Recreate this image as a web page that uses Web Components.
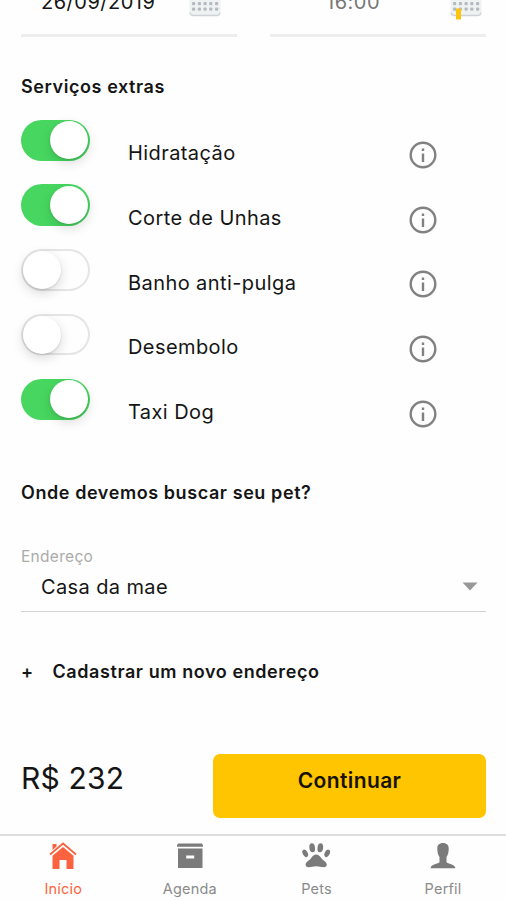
<!DOCTYPE html>
<html lang="pt-BR">
<head>
<meta charset="utf-8">
<title>Serviços extras</title>
<style>
  body {
    margin: 0;
    height: 900px;
    overflow: hidden;
    background: #fefefe;
    color: #151515;
    font-family: Inter, "Liberation Sans", sans-serif;
  }
</style>
</head>
<body>
<pet-booking></pet-booking>

<script>
"use strict";

(function () {
  const ICONS = {
    home: `<path d="M2 13.500 15 2.500 28 13.500" fill="none" stroke="currentColor" stroke-width="1.800"/><path d="M4.500 9V3h4v2.600zM15 6 25.500 14.800V28H18.500v-9h-7v9H4.500V14.800z"/>`,
    agenda: `<path d="M3 2.500h24q1.200 1.500 1 3.300H2q-.2-1.800 1-3.300zM3 7.500h24.500V27H3z"/><path d="M11.200 14.500h8v3h-8z" fill="#fefefe"/>`,
    pets: `<ellipse cx="11.200" cy="6.800" rx="2.800" ry="4.500" transform="rotate(-8 11.200 6.800)"/><ellipse cx="19.300" cy="6.800" rx="2.800" ry="4.500" transform="rotate(8 19.300 6.800)"/><ellipse cx="4.200" cy="12.300" rx="2.500" ry="4" transform="rotate(-25 4.200 12.300)"/><ellipse cx="26.200" cy="12.300" rx="2.500" ry="4" transform="rotate(25 26.200 12.300)"/><path d="M15.200 13.500c2 0 3.500 1.400 5 3.600 1.800 2.600 5.600 3.900 5.600 6.700 0 1.500-1.200 2.500-3 2.500-3 0-4.500-1-7.600-1s-4.600 1-7.600 1c-1.800 0-3-1-3-2.500 0-2.800 3.800-4.100 5.600-6.700 1.500-2.200 3-3.600 5-3.600z"/>`,
    perfil: `<path d="M15 2c3.800 0 5.800 2.300 5.700 5.500 0 3.500-.6 6.500-2.200 8.500v5.200c1 1.900 8.700 1.600 8.900 6.100H2.600c.2-4.500 7.900-4.200 8.900-6.100V16c-1.600-2-2.200-5-2.200-8.500C9.200 4.300 11.200 2 15 2z"/>`
  };

  function shadow(host, html) {
    host.attachShadow({ mode: "open" }).innerHTML = html;
  }

  class DateField extends HTMLElement {
    connectedCallback() {
      const dots = [3.5, 9].map((y) =>
        [4.5, 10.3, 16, 21.700, 27.500].map((x) => `<rect x="${x - 1.500}" y="${y + 18.500}" width="3.200" height="3.200" rx="1"/>`).join("")
      ).join("");
      const marker = this.hasAttribute("marked")
        ? `<path d="M6 28.500h5v11H6z" fill="#fdc40d"/>` : "";
      shadow(this, `
        <style>
          :host {
            display: flex;
            justify-content: space-between;
            box-sizing: border-box;
            width: 216px;
            height: 57px;
            border-bottom: 3px solid #ededed;
            padding: 0 16px 0 20px;
            font-size: 20px;
          }
          span { line-height: 24px; padding-top: 10px; letter-spacing: .5px; }
          :host([marked]) { color: #777; padding: 0 4px 0 56px; }
          svg { width: 32px; height: 40px; }
        </style>
        <span><slot></slot></span>
        <svg viewBox="0 0 32 40">
          <rect x=".5" y="4" width="31" height="31.500" rx="3" fill="#eff2f3"/>
          <path d="M1 32.500q.5 3 3 3h24q2.500 0 3-3" fill="none" stroke="#ccd2d5" stroke-width="1.300"/>
          <g fill="#b4bbc0">${dots}</g>${marker}
        </svg>`);
    }
  }

  class ToggleSwitch extends HTMLElement {
    connectedCallback() {
      shadow(this, `
        <style>
          :host {
            display: flex;
            align-items: center;
            box-sizing: border-box;
            width: 68.5px;
            height: 41.5px;
            padding: 0 1.5px;
            border-radius: 21px;
            box-shadow: inset 0 0 0 2px #e5e5e6;
          }
          i {
            width: 38px;
            height: 38px;
            border-radius: 50%;
            background: #fff;
            box-shadow: 0 4px 12px rgba(0, 0, 0, .15), 0 1px 2px rgba(0, 0, 0, .12);
          }
          :host([on]) { background: #47d760; justify-content: flex-end; box-shadow: none; }
        </style>
        <i></i>`);
    }
  }

  class ServiceRow extends HTMLElement {
    connectedCallback() {
      shadow(this, `
        <style>
          :host {
            display: grid;
            grid-template-columns: 107px 281px 28px;
            height: 64.8px;
            font-size: 20px;
          }
          span { line-height: 24px; padding-top: 21.5px; letter-spacing: .42px; white-space: nowrap; }
          svg { width: 28px; height: 28px; margin-top: 21.3px; }
        </style>
        <toggle-switch ${this.hasAttribute("on") ? "on" : ""}></toggle-switch>
        <span><slot></slot></span>
        <svg viewBox="0 0 28 28">
          <circle cx="14" cy="14" r="12.300" fill="none" stroke="#818181" stroke-width="2.400"/>
          <path d="M12.800 7.500h2.400v2.600h-2.400zM12.800 12.500h2.400v8.500h-2.400z" fill="#818181"/>
        </svg>`);
    }
  }

  class AddressSelect extends HTMLElement {
    connectedCallback() {
      shadow(this, `
        <style>
          :host { display: block; box-sizing: border-box; height: 65px; border-bottom: 1.500px solid #d2d2d2; }
          label { display: block; font-size: 15.500px; line-height: 20px; color: #ababab; letter-spacing: .3px; }
          div {
            display: flex;
            align-items: center;
            justify-content: space-between;
            height: 40px;
            padding: 0 8px 0 20px;
            font-size: 20px;
            letter-spacing: .38px;
          }
          svg { width: 16px; height: 9px; }
        </style>
        <label>${this.getAttribute("label")}</label>
        <div><slot></slot><svg viewBox="0 0 16 9"><path d="M.5.500h15L8 8.500z" fill="#999"/></svg></div>`);
    }
  }

  class TabItem extends HTMLElement {
    connectedCallback() {
      shadow(this, `
        <style>
          :host {
            display: flex;
            flex-direction: column;
            align-items: center;
            padding-top: 5px;
            color: #7b7b7b;
            font-size: 14.500px;
            line-height: 18px;
          }
          :host([active]) { color: #fb6340; }
          svg { width: 30px; height: 30px; fill: currentColor; }
          span { margin-top: 9px; letter-spacing: .2px; color: #8b8b8b; }
          :host([active]) span { color: inherit; }
        </style>
        <svg viewBox="0 0 30 30">${ICONS[this.getAttribute("icon")]}</svg>
        <span><slot></slot></span>`);
    }
  }

  class PetBooking extends HTMLElement {
    connectedCallback() {
      shadow(this, `
        <style>
          :host { display: flex; flex-direction: column; height: 900px; }
          main { height: 854px; margin-top: -20px; padding: 0 20px 0 21px; box-sizing: border-box; }
          .when { display: flex; justify-content: space-between; }
          h2 { margin: 0; font-size: 18px; line-height: 24px; font-weight: 600; letter-spacing: .58px; white-space: nowrap; }
          .extras { margin-top: 38px; }
          .services { margin-top: 20.5px; height: 324px; }
          .where { margin-top: 37.500px; }
          address-select { margin-top: 41.500px; }
          .add { display: flex; margin-top: 48.500px; }
          .add b { width: 31.500px; font-weight: 600; }
          .checkout { display: flex; justify-content: space-between; margin-top: 69.500px; }
          .price { font-size: 30px; line-height: 49px; letter-spacing: .2px; }
          button {
            width: 273px;
            height: 64px;
            padding: 0 0 11px;
            border: 0;
            border-radius: 7px;
            background: #ffc500;
            color: #171200;
            font: 600 21px Inter, sans-serif;
            letter-spacing: .4px;
          }
          nav { display: grid; grid-template-columns: repeat(4, 126.600px); height: 66px; box-sizing: border-box; border-top: 2px solid #dedede; }
        </style>
        <main>
          <div class="when">
            <date-field>26/09/2019</date-field>
            <date-field marked>16:00</date-field>
          </div>
          <h2 class="extras"><span>Serviços extras</span></h2>
          <div class="services">
            <service-row on>Hidratação</service-row>
            <service-row on>Corte de Unhas</service-row>
            <service-row>Banho anti-pulga</service-row>
            <service-row>Desembolo</service-row>
            <service-row on>Taxi Dog</service-row>
          </div>
          <h2 class="where"><span>Onde devemos buscar seu pet?</span></h2>
          <address-select label="Endereço">Casa da mae</address-select>
          <h2 class="add"><b>+</b><span>Cadastrar um novo endereço</span></h2>
          <div class="checkout"><span class="price">R$ 232</span><button>Continuar</button></div>
        </main>
        <nav>
          <tab-item icon="home" active>Início</tab-item>
          <tab-item icon="agenda">Agenda</tab-item>
          <tab-item icon="pets">Pets</tab-item>
          <tab-item icon="perfil">Perfil</tab-item>
        </nav>`);
    }
  }

  customElements.define("date-field", DateField);
  customElements.define("toggle-switch", ToggleSwitch);
  customElements.define("service-row", ServiceRow);
  customElements.define("address-select", AddressSelect);
  customElements.define("tab-item", TabItem);
  customElements.define("pet-booking", PetBooking);
})();
</script>
</body>
</html>
